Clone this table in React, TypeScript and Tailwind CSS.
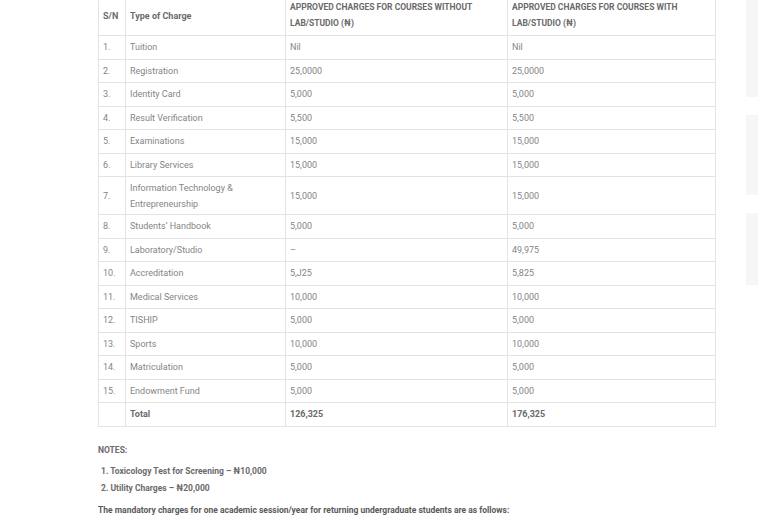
import React from "react";

const rows: [string, string, string, string][] = [
  ["1.", "Tuition", "Nil", "Nil"],
  ["2.", "Registration", "25,0000", "25,0000"],
  ["3.", "Identity Card", "5,000", "5,000"],
  ["4.", "Result Verification", "5,500", "5,500"],
  ["5.", "Examinations", "15,000", "15,000"],
  ["6.", "Library Services", "15,000", "15,000"],
  ["7.", "Information Technology & Entrepreneurship", "15,000", "15,000"],
  ["8.", "Students\u2019 Handbook", "5,000", "5,000"],
  ["9.", "Laboratory/Studio", "\u2013", "49,975"],
  ["10.", "Accreditation", "5,J25", "5,825"],
  ["11.", "Medical Services", "10,000", "10,000"],
  ["12.", "TISHIP", "5,000", "5,000"],
  ["13.", "Sports", "10,000", "10,000"],
  ["14.", "Matriculation", "5,000", "5,000"],
  ["15.", "Endowment Fund", "5,000", "5,000"],
];

export default function App() {
  return (
    <div
      className="w-[758px] h-[520px] overflow-hidden bg-white text-[#858585]"
      style={{ fontFamily: "Roboto, 'Liberation Sans', sans-serif" }}
    >
      <div className="flex gap-[30px] pl-[98px]">
        <div className="w-[618px] shrink-0">
          <table className="w-full border-collapse border border-[#e3e3e3] mt-[-8px] text-[9px] leading-[16px]">
            <colgroup>
              <col className="w-[27px]" />
              <col className="w-[160px]" />
              <col className="w-[222px]" />
              <col />
            </colgroup>
            <thead>
              <tr className="h-[43px]">
                <th className="border border-[#e3e3e3] px-[4px] pt-[4px] text-left font-bold text-[#6a6a6a]">S/N</th>
                <th className="border border-[#e3e3e3] px-[4px] pt-[4px] text-left font-bold text-[#6a6a6a]">Type of Charge</th>
                <th className="border border-[#e3e3e3] px-[4px] pt-[6px] text-left font-bold text-[#6a6a6a] uppercase text-[8.5px] leading-[16px] align-top">
                  Approved charges for courses without lab/studio (₦)
                </th>
                <th className="border border-[#e3e3e3] px-[4px] pt-[6px] text-left font-bold text-[#6a6a6a] uppercase text-[8.5px] leading-[16px] align-top">
                  Approved charges for courses with lab/studio (₦)
                </th>
              </tr>
            </thead>
            <tbody>
              {rows.map((r) => (
                <tr key={r[0]} className={r[0] === "7." ? "h-[38px]" : "h-[23.5px]"}>
                  <td className="border border-[#e3e3e3] px-[4px] py-0">{r[0]}</td>
                  <td className="border border-[#e3e3e3] px-[4px] py-0">
                    {r[0] === "7." ? (
                      <>
                        Information Technology &amp;
                        <br />
                        Entrepreneurship
                      </>
                    ) : (
                      r[1]
                    )}
                  </td>
                  <td className="border border-[#e3e3e3] px-[4px] py-0">{r[2]}</td>
                  <td className="border border-[#e3e3e3] px-[4px] py-0">{r[3]}</td>
                </tr>
              ))}
              <tr className="h-[23.5px]">
                <td className="border border-[#e3e3e3] px-[4px]"></td>
                <td className="border border-[#e3e3e3] px-[4px] font-bold text-[#6a6a6a]">Total</td>
                <td className="border border-[#e3e3e3] px-[4px] font-bold text-[#6a6a6a]">126,325</td>
                <td className="border border-[#e3e3e3] px-[4px] font-bold text-[#6a6a6a]">176,325</td>
              </tr>
            </tbody>
          </table>
          <div className="mt-[15px] text-[8.5px] font-bold text-[#6a6a6a] leading-[16px]">NOTES:</div>
          <ol className="mt-[5px] ml-[3px] text-[8.5px] font-bold text-[#6a6a6a] leading-[17px]">
            <li>1. Toxicology Test for Screening – ₦10,000</li>
            <li>2. Utility Charges – ₦20,000</li>
          </ol>
          <p className="mt-[5px] text-[8.5px] font-bold text-[#5a5a5a] leading-[16px] whitespace-nowrap">
            The mandatory charges for one academic session/year for returning undergraduate students are as follows:
          </p>
        </div>
        <div className="flex flex-col gap-[18px] w-[200px] shrink-0">
          <div className="h-[97px] bg-[#f6f6f6]" />
          <div className="h-[80px] bg-[#f6f6f6]" />
          <div className="h-[72px] bg-[#f6f6f6]" />
        </div>
      </div>
    </div>
  );
}
